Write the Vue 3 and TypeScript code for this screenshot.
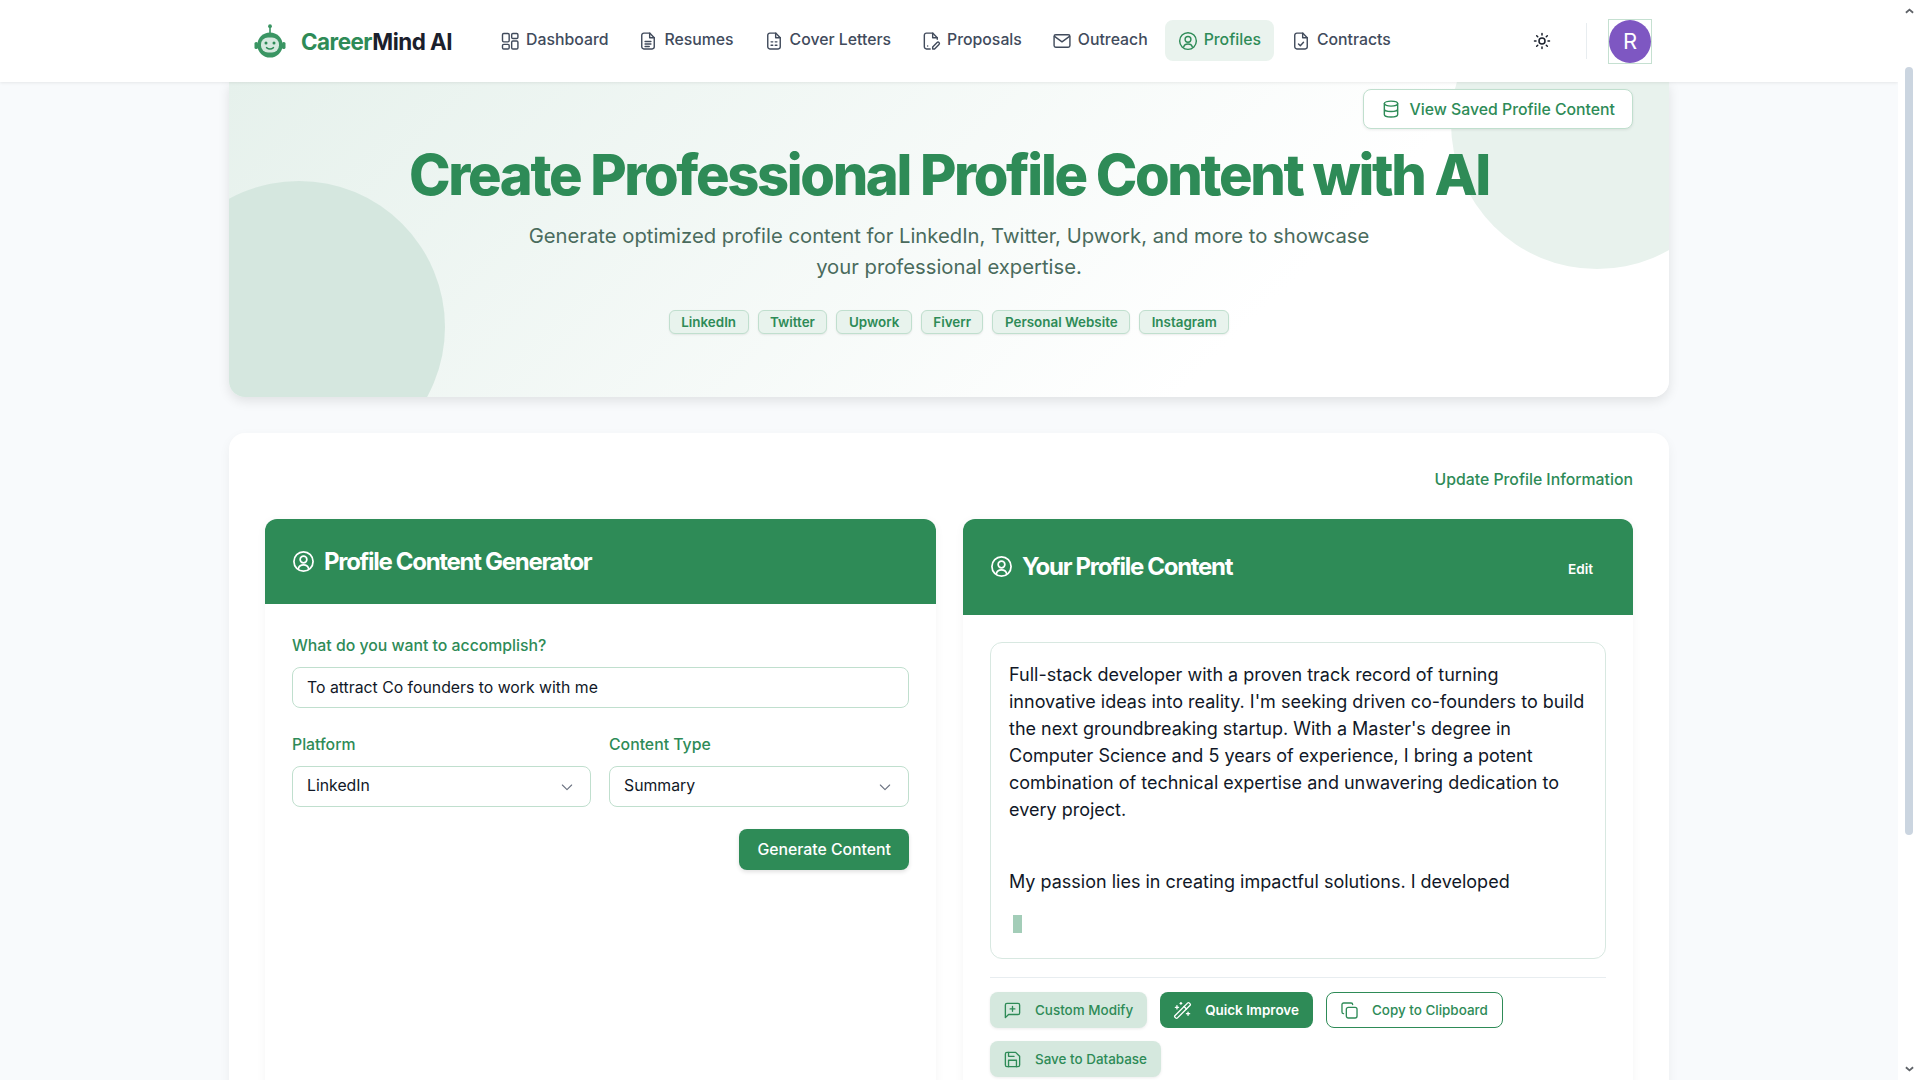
<template>
  <div class="screen">
    <div class="page">
      <header class="nav">
        <div class="nav-inner">
          <div class="brand">
            <svg class="logo" viewBox="0 0 32 34" width="32" height="34">
              <circle cx="16" cy="2.2" r="1.9" fill="#3a9563" />
              <rect x="15.2" y="3" width="1.6" height="6" fill="#3a9563" />
              <rect x="0.5" y="18" width="3.5" height="7" rx="1.6" fill="#3a9563" />
              <rect x="28" y="18" width="3.5" height="7" rx="1.6" fill="#3a9563" />
              <circle cx="16" cy="21" r="12.6" fill="#3a9563" />
              <rect x="7" y="13.5" width="18" height="15" rx="7" fill="#d5e8de" />
              <circle cx="12" cy="19" r="1.5" fill="#2e8b57" />
              <circle cx="20" cy="19" r="1.5" fill="#2e8b57" />
              <path d="M12.5 23.6c2 1.6 5 1.6 7 0" fill="none" stroke="#2e8b57" stroke-width="1.4" stroke-linecap="round" />
            </svg>
            <span class="brand-name"><span class="brand-green">Career</span>Mind AI</span>
          </div>
          <nav class="links">
            <a v-for="link in links" :key="link.label" class="link" :class="{ active: link.label === 'Profiles' }">
              <svg class="ico" viewBox="0 0 24 24" v-html="link.icon" />
              <span class="link-text">{{ link.label }}</span>
            </a>
          </nav>
          <svg class="sun" viewBox="0 0 24 24">
            <circle cx="12" cy="12" r="4" />
            <path d="M12 2v2M12 20v2M4.9 4.9l1.4 1.4M17.7 17.7l1.4 1.4M2 12h2M20 12h2M4.9 19.1l1.4-1.4M17.7 6.3l1.4-1.4" />
          </svg>
          <span class="nav-divider" />
          <span class="avatar-box"><span class="avatar">R</span></span>
        </div>
      </header>

      <main class="main">
        <section class="hero">
          <span class="blob blob-left" />
          <span class="blob blob-right" />
          <div class="hero-top">
            <button type="button" class="saved-btn">
              <svg class="ico" viewBox="0 0 24 24">
                <ellipse cx="12" cy="5.5" rx="8" ry="3" />
                <path d="M4 5.5v13c0 1.7 3.6 3 8 3s8-1.3 8-3v-13M4 12c0 1.7 3.6 3 8 3s8-1.3 8-3" />
              </svg>
              View Saved Profile Content
            </button>
          </div>
          <h1 class="hero-title">Create Professional Profile Content with AI</h1>
          <p class="hero-sub">Generate optimized profile content for LinkedIn, Twitter, Upwork, and more to showcase your professional expertise.</p>
          <div class="tags">
            <span v-for="tag in tags" :key="tag" class="tag">{{ tag }}</span>
          </div>
        </section>

        <section class="workspace">
          <div class="update-row"><a class="update-link">Update Profile Information</a></div>
          <div class="columns">
            <div class="card">
              <div class="card-head">
                <svg class="head-ico" viewBox="0 0 24 24" v-html="userCircle" />
                <h2>Profile Content Generator</h2>
              </div>
              <div class="card-body form">
                <label class="field">
                  <span class="label">What do you want to accomplish?</span>
                  <input class="control" type="text" value="To attract Co founders to work with me" />
                </label>
                <div class="field-row">
                  <div v-for="select in selects" :key="select.label" class="field">
                    <span class="label">{{ select.label }}</span>
                    <div class="control select">
                      {{ select.value }}
                      <svg class="chev" viewBox="0 0 24 24"><path d="M5 9l7 7 7-7" /></svg>
                    </div>
                  </div>
                </div>
                <div class="form-actions">
                  <button type="button" class="generate">Generate Content</button>
                </div>
              </div>
            </div>

            <div class="card">
              <div class="card-head tall">
                <svg class="head-ico" viewBox="0 0 24 24" v-html="userCircle" />
                <h2>Your Profile Content</h2>
                <button type="button" class="edit">Edit</button>
              </div>
              <div class="card-body output">
                <div class="result">
                  <p>Full-stack developer with a proven track record of turning innovative ideas into reality. I'm seeking driven co-founders to build the next groundbreaking startup. With a Master's degree in Computer Science and 5 years of experience, I bring a potent combination of technical expertise and unwavering dedication to every project.</p>
                  <p>My passion lies in creating impactful solutions. I developed</p>
                  <span class="cursor" />
                </div>
                <div class="actions">
                  <button v-for="action in actions" :key="action.label" type="button" class="action" :class="action.kind">
                    <svg class="action-ico" viewBox="0 0 24 24" v-html="action.icon" />
                    {{ action.label }}
                  </button>
                </div>
              </div>
            </div>
          </div>
        </section>
      </main>
    </div>

    <aside class="scrollbar">
      <svg class="arrow" viewBox="0 0 10 6"><path d="M1 5l4-3.5 4 3.5" /></svg>
      <span class="thumb" />
      <svg class="arrow arrow-down" viewBox="0 0 10 6"><path d="M1 1l4 3.5 4-3.5" /></svg>
    </aside>
  </div>
</template>

<script setup lang="ts">
const userCircle =
  '<circle cx="12" cy="12" r="10"/><circle cx="12" cy="10" r="3.5"/><path d="M6.8 19c.6-2.3 2.7-3.5 5.2-3.5s4.6 1.2 5.2 3.5"/>';
const fileBase = '<path d="M14 2.5H7A2.5 2.5 0 0 0 4.5 5v14A2.5 2.5 0 0 0 7 21.5h10a2.5 2.5 0 0 0 2.5-2.5V8z"/><path d="M14 2.5V8h5.5"/>';

const links = [
  {
    label: 'Dashboard',
    icon: '<rect x="3" y="3" width="8" height="10" rx="1.5"/><rect x="14" y="3" width="7.5" height="6" rx="1.5"/><rect x="14" y="12" width="7.5" height="9.5" rx="1.5"/><rect x="3" y="16" width="8" height="5.5" rx="1.5"/>',
  },
  { label: 'Resumes', icon: fileBase + '<path d="M8.5 12.5h7M8.5 15.5h7M8.5 18.5h5"/>' },
  { label: 'Cover Letters', icon: fileBase + '<path d="M8.5 13h2M13.5 13h2M8.5 17h2M13.5 17h2"/>' },
  {
    label: 'Proposals',
    icon: '<path d="M11 21.5H6.5A2.5 2.5 0 0 1 4 19V5a2.5 2.5 0 0 1 2.5-2.5H14L19.5 8v2"/><path d="M14 2.5V8h5.5"/><path d="M8 18h.01"/><path d="M14 21.5v-2.3l5.3-5.3a1.6 1.6 0 0 1 2.3 2.3l-5.3 5.3z"/>',
  },
  { label: 'Outreach', icon: '<rect x="2.5" y="4.5" width="19" height="15" rx="2"/><path d="M3 6.5l9 6.5 9-6.5"/>' },
  { label: 'Profiles', icon: userCircle },
  { label: 'Contracts', icon: fileBase + '<path d="M9 15.5l2.2 2.2L15 13.5"/>' },
];

const tags = ['LinkedIn', 'Twitter', 'Upwork', 'Fiverr', 'Personal Website', 'Instagram'];

const selects = [
  { label: 'Platform', value: 'LinkedIn' },
  { label: 'Content Type', value: 'Summary' },
];

const actions = [
  {
    label: 'Custom Modify',
    kind: 'soft',
    icon: '<path d="M21 15a2 2 0 0 1-2 2H7l-4 4V5a2 2 0 0 1 2-2h14a2 2 0 0 1 2 2z"/><path d="M12 7v6M9 10h6"/>',
  },
  {
    label: 'Quick Improve',
    kind: 'solid',
    icon: '<path d="m21.64 3.64-1.28-1.28a1.21 1.21 0 0 0-1.72 0L2.36 18.64a1.21 1.21 0 0 0 0 1.72l1.28 1.28a1.2 1.2 0 0 0 1.72 0L21.64 5.36a1.2 1.2 0 0 0 0-1.72"/><path d="m14 7 3 3"/><path d="M5 6v4"/><path d="M19 14v4"/><path d="M10 2v2"/><path d="M7 8H3"/><path d="M21 16h-4"/><path d="M11 3H9"/>',
  },
  {
    label: 'Copy to Clipboard',
    kind: 'outline',
    icon: '<rect x="8" y="8" width="13.5" height="13.5" rx="2.5"/><path d="M4.5 16a2 2 0 0 1-2-2V4.5a2 2 0 0 1 2-2H14a2 2 0 0 1 2 2"/>',
  },
  {
    label: 'Save to Database',
    kind: 'soft',
    icon: '<path d="M5 3h11l5 5v11a2 2 0 0 1-2 2H5a2 2 0 0 1-2-2V5a2 2 0 0 1 2-2z"/><path d="M7 21v-8h10v8M7 3v5h7"/>',
  },
];
</script>

<style scoped>
.screen {
  display: flex;
  height: 100vh;
  overflow: hidden;
  background: #fff;
  font-family: Inter, 'Noto Sans', sans-serif;
  color: #111827;
}
.page {
  flex: 1;
  min-width: 0;
  background: #f8fafc;
  overflow: hidden;
}
.nav {
  position: relative;
  z-index: 2;
  height: 82px;
  background: #fff;
  box-shadow: 0 1px 3px rgba(0, 0, 0, 0.08);
}
.nav-inner {
  width: 1440px;
  height: 100%;
  margin: 0 auto;
  padding: 0 17px 0 25px;
  box-sizing: border-box;
  display: flex;
  align-items: center;
}
.brand {
  display: flex;
  align-items: center;
  gap: 15px;
}
.logo {
  display: block;
  margin-top: -1px;
}
.brand-name {
  font-size: 22.4px;
  font-weight: 700;
  letter-spacing: -0.5px;
  color: #1a202c;
}
.brand-green {
  color: #2e8b57;
}
.links {
  display: flex;
  gap: 4px;
  margin: -1px 0 0 35px;
}
.link {
  display: flex;
  align-items: center;
  gap: 6px;
  height: 41px;
  padding: 0 13px;
  border-radius: 8px;
  font-size: 15.8px;
  font-weight: 500;
  color: #414b5c;
}
.link-text {
  margin-top: -2px;
}
.link.active {
  background: #eaf3ee;
  color: #2e8b57;
}
.ico {
  width: 20px;
  height: 20px;
  flex: none;
  fill: none;
  stroke: currentColor;
  stroke-width: 1.7;
  stroke-linecap: round;
  stroke-linejoin: round;
}
.sun {
  width: 18px;
  height: 18px;
  margin-left: auto;
  fill: none;
  stroke: #1a202c;
  stroke-width: 2;
  stroke-linecap: round;
}
.nav-divider {
  width: 1px;
  height: 36px;
  margin: 0 21px 0 35px;
  background: #e8edf0;
}
.avatar-box {
  display: block;
  border: 1px solid #c5e0d1;
  line-height: 0;
}
.avatar {
  display: flex;
  align-items: center;
  justify-content: center;
  width: 42px;
  height: 43px;
  border-radius: 50%;
  background: #7e57c2;
  color: #fff;
  font-size: 22px;
  line-height: 1;
}
.main {
  width: 1440px;
  margin: 0 auto;
}
.hero {
  position: relative;
  height: 315px;
  padding: 7px 36px 0;
  box-sizing: border-box;
  overflow: hidden;
  border-radius: 0 0 16px 16px;
  background: linear-gradient(135deg, #e6f1ec 0%, #ffffff 72%);
  box-shadow: 0 4px 12px rgba(0, 0, 0, 0.1);
  text-align: center;
}
.blob {
  position: absolute;
  width: 292px;
  height: 292px;
  border-radius: 50%;
}
.blob-left {
  left: -76px;
  top: 99px;
  background: #d5e7df;
}
.blob-right {
  left: 1222px;
  top: -105px;
  background: #e8f2ed;
}
.hero-top {
  position: relative;
  display: flex;
  justify-content: flex-end;
}
.saved-btn {
  display: flex;
  align-items: center;
  gap: 9px;
  height: 40px;
  padding: 0 17px;
  border: 1px solid #c0dfce;
  border-radius: 8px;
  background: #fff;
  box-shadow: 0 1px 3px rgba(0, 0, 0, 0.08);
  color: #2e8b57;
  font: 500 15.8px Inter, sans-serif;
}
.hero-title {
  position: relative;
  margin: 12px 0 0;
  font-size: 56px;
  line-height: 68px;
  font-weight: 800;
  letter-spacing: -2.33px;
  color: #2e8b57;
}
.hero-sub {
  position: relative;
  width: 860px;
  margin: 11px auto 0;
  font-size: 20.25px;
  line-height: 31px;
  color: #4a6b5d;
}
.tags {
  position: relative;
  display: flex;
  justify-content: center;
  gap: 9px;
  margin-top: 28px;
}
.tag {
  padding: 3px 11.5px;
  border: 1px solid #c0dfce;
  border-radius: 6px;
  background: #e8f3ed;
  box-shadow: 0 1px 2px rgba(0, 0, 0, 0.08);
  color: #2e8b57;
  font-size: 13.4px;
  line-height: 16px;
  font-weight: 600;
}
.workspace {
  margin-top: 36px;
  padding: 36px 36px 0;
  height: 700px;
  box-sizing: border-box;
  border-radius: 16px;
  background: #fff;
  box-shadow: 0 4px 12px rgba(0, 0, 0, 0.05);
}
.update-row {
  display: flex;
  justify-content: flex-end;
  height: 50px;
  padding-top: 1px;
  box-sizing: border-box;
}
.update-link {
  font-size: 15.8px;
  line-height: 20px;
  font-weight: 500;
  color: #2e8b57;
}
.columns {
  display: grid;
  grid-template-columns: 671px 670px;
  gap: 27px;
}
.card {
  border-radius: 12px;
  background: #fff;
  box-shadow: 0 2px 10px rgba(0, 0, 0, 0.05);
  overflow: hidden;
  height: 700px;
}
.card-head {
  display: flex;
  align-items: center;
  gap: 9px;
  height: 85px;
  padding: 0 27px;
  background: #2e8b57;
  color: #fff;
}
.card-head.tall {
  height: 96px;
  padding-bottom: 1px;
  box-sizing: border-box;
}
.card-head h2 {
  margin: 0;
  font-size: 24px;
  font-weight: 700;
  letter-spacing: -1.3px;
}
.head-ico {
  width: 23px;
  height: 23px;
  flex: none;
  fill: none;
  stroke: currentColor;
  stroke-width: 1.8;
  stroke-linecap: round;
}
.edit {
  margin: 4px 7px 0 auto;
  border: 0;
  background: none;
  color: #fff;
  font: 600 13.6px Inter, sans-serif;
}
.form {
  padding: 32px 27px 0;
}
.field {
  display: flex;
  flex-direction: column;
  gap: 11px;
  min-width: 0;
}
.label {
  font-size: 15.8px;
  line-height: 20px;
  font-weight: 500;
  color: #2e8b57;
}
.control {
  width: 100%;
  height: 41px;
  padding: 0 14px;
  box-sizing: border-box;
  border: 1px solid #c0dfce;
  border-radius: 8px;
  background: #fff;
  color: #111827;
  font: 400 15.8px Inter, sans-serif;
  outline: none;
}
.select {
  display: flex;
  align-items: center;
  justify-content: space-between;
  padding-bottom: 2px;
}
.chev {
  width: 16px;
  height: 16px;
  margin-top: 2px;
  margin-right: 1px;
  fill: none;
  stroke: #6b7280;
  stroke-width: 1.6;
  stroke-linecap: round;
  stroke-linejoin: round;
}
.field-row {
  display: grid;
  grid-template-columns: 299px 300px;
  gap: 18px;
  margin-top: 27px;
}
.form-actions {
  display: flex;
  justify-content: flex-end;
  margin-top: 22px;
}
.generate {
  height: 41px;
  padding: 0 18px;
  border: 0;
  border-radius: 8px;
  background: #2e8b57;
  box-shadow: 0 2px 4px rgba(0, 0, 0, 0.12);
  color: #fff;
  font: 500 15.8px Inter, sans-serif;
}
.output {
  padding: 27px 27px 0;
}
.result {
  height: 317px;
  padding: 18px;
  box-sizing: border-box;
  border: 1px solid #d8e8e1;
  border-radius: 12px;
  font-size: 18px;
  line-height: 27px;
  color: #111827;
}
.result p {
  margin: 0 0 45px;
}
.result p + p {
  margin-bottom: 20px;
}
.cursor {
  display: block;
  width: 9px;
  height: 18px;
  margin-left: 4px;
  background: #a3cdb8;
}
.actions {
  display: flex;
  flex-wrap: wrap;
  gap: 13px;
  margin-top: 18px;
  padding-top: 14px;
  border-top: 1px solid #e8edf0;
}
.action {
  display: flex;
  align-items: center;
  gap: 13px;
  height: 36px;
  padding: 0 14px 0 13px;
  box-sizing: border-box;
  border: 0;
  border-radius: 8px;
  font: 500 13.45px Inter, sans-serif;
}
.action-ico {
  width: 19px;
  height: 19px;
  fill: none;
  stroke: currentColor;
  stroke-width: 1.7;
  stroke-linecap: round;
  stroke-linejoin: round;
}
.action.soft {
  background: #d5e8de;
  color: #2e8b57;
  box-shadow: 0 1px 3px rgba(0, 0, 0, 0.08);
}
.action.solid {
  background: #2e8b57;
  color: #fff;
  font-weight: 600;
}
.action.outline {
  border: 1px solid #2e8b57;
  background: #fff;
  color: #2e8b57;
}
.scrollbar {
  flex: none;
  width: 22px;
  display: flex;
  flex-direction: column;
  align-items: center;
}
.arrow {
  flex: none;
  width: 9px;
  height: 6px;
  margin-top: 8px;
  fill: none;
  stroke: #5f6368;
  stroke-width: 2;
}
.arrow-down {
  margin-top: 231px;
}
.thumb {
  flex: none;
  width: 8px;
  height: 768px;
  margin-top: 53px;
  border-radius: 4px;
  background: #cbd5e0;
}
</style>

<style>
html,
body {
  margin: 0;
  overflow: hidden;
}
</style>
